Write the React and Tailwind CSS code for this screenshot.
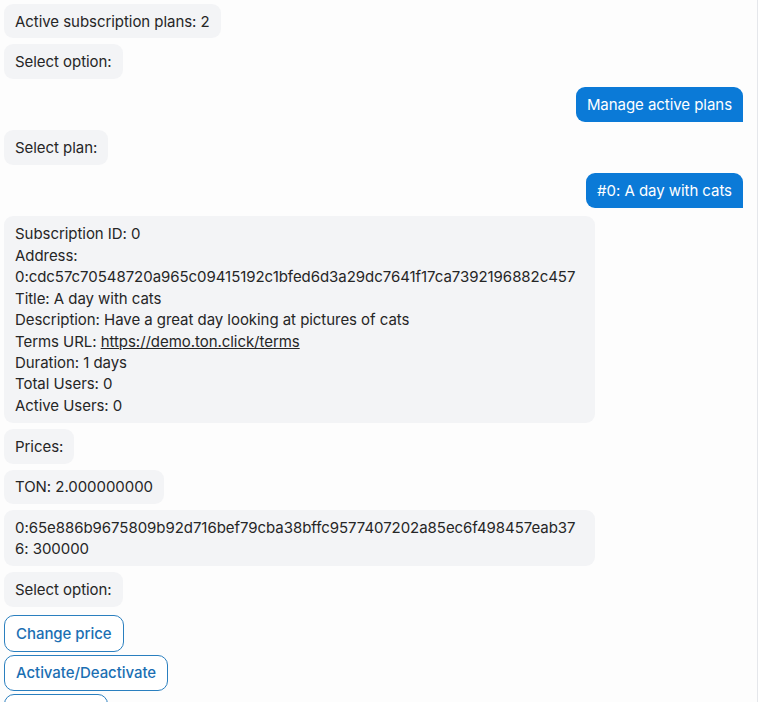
import React from "react";

function Bot({ children, className = "" }) {
  return (
    <div className={"self-start max-w-[80%] rounded-[9px] bg-[#f3f4f6] px-[11px] py-[6.5px] text-[#262626] break-words " + className}>
      {children}
    </div>
  );
}

function User({ children }) {
  return (
    <div className="self-end my-[2.5px] max-w-[80%] rounded-[9px] rounded-br-none bg-[#0b7ad7] px-[11px] py-[6.5px] text-white">
      {children}
    </div>
  );
}

function Btn({ children }) {
  return (
    <button className="self-start rounded-[10px] border border-[#2a7fbf] bg-white px-[11px] py-[6.5px] text-left font-medium text-[#1b6fb3]">
      {children}
    </button>
  );
}

export default function App() {
  return (
    <div
      className="h-[702px] w-[758px] overflow-hidden border-r border-[#e5e7eb] bg-[#fdfdfd] text-[15px] leading-[21.45px] tracking-[-0.05px]"
      style={{ fontFamily: "Inter, 'Noto Sans', sans-serif" }}
    >
      <div className="flex flex-col gap-[6px] pl-1 pr-[14px] pt-1">
        <Bot>Active subscription plans: 2</Bot>
        <Bot>Select option:</Bot>
        <User>Manage active plans</User>
        <Bot>Select plan:</Bot>
        <User>#0: A day with cats</User>
        <Bot className="w-full py-[7px]">
          <div>Subscription ID: 0</div>
          <div>Address:</div>
          <div>0:cdc57c70548720a965c09415192c1bfed6d3a29dc7641f17ca7392196882c457</div>
          <div>Title: A day with cats</div>
          <div>Description: Have a great day looking at pictures of cats</div>
          <div>
            Terms URL: <span className="underline">https://demo.ton.click/terms</span>
          </div>
          <div>Duration: 1 days</div>
          <div>Total Users: 0</div>
          <div>Active Users: 0</div>
        </Bot>
        <Bot>Prices:</Bot>
        <Bot>TON: 2.000000000</Bot>
        <Bot className="w-full">
          0:65e886b9675809b92d716bef79cba38bffc9577407202a85ec6f498457eab376: 300000
        </Bot>
        <Bot>Select option:</Bot>
        <div className="mt-[2.5px] flex flex-col gap-[3px]">
          <Btn>Change price</Btn>
          <Btn>Activate/Deactivate</Btn>
          <Btn>Delete plan</Btn>
        </div>
      </div>
    </div>
  );
}
